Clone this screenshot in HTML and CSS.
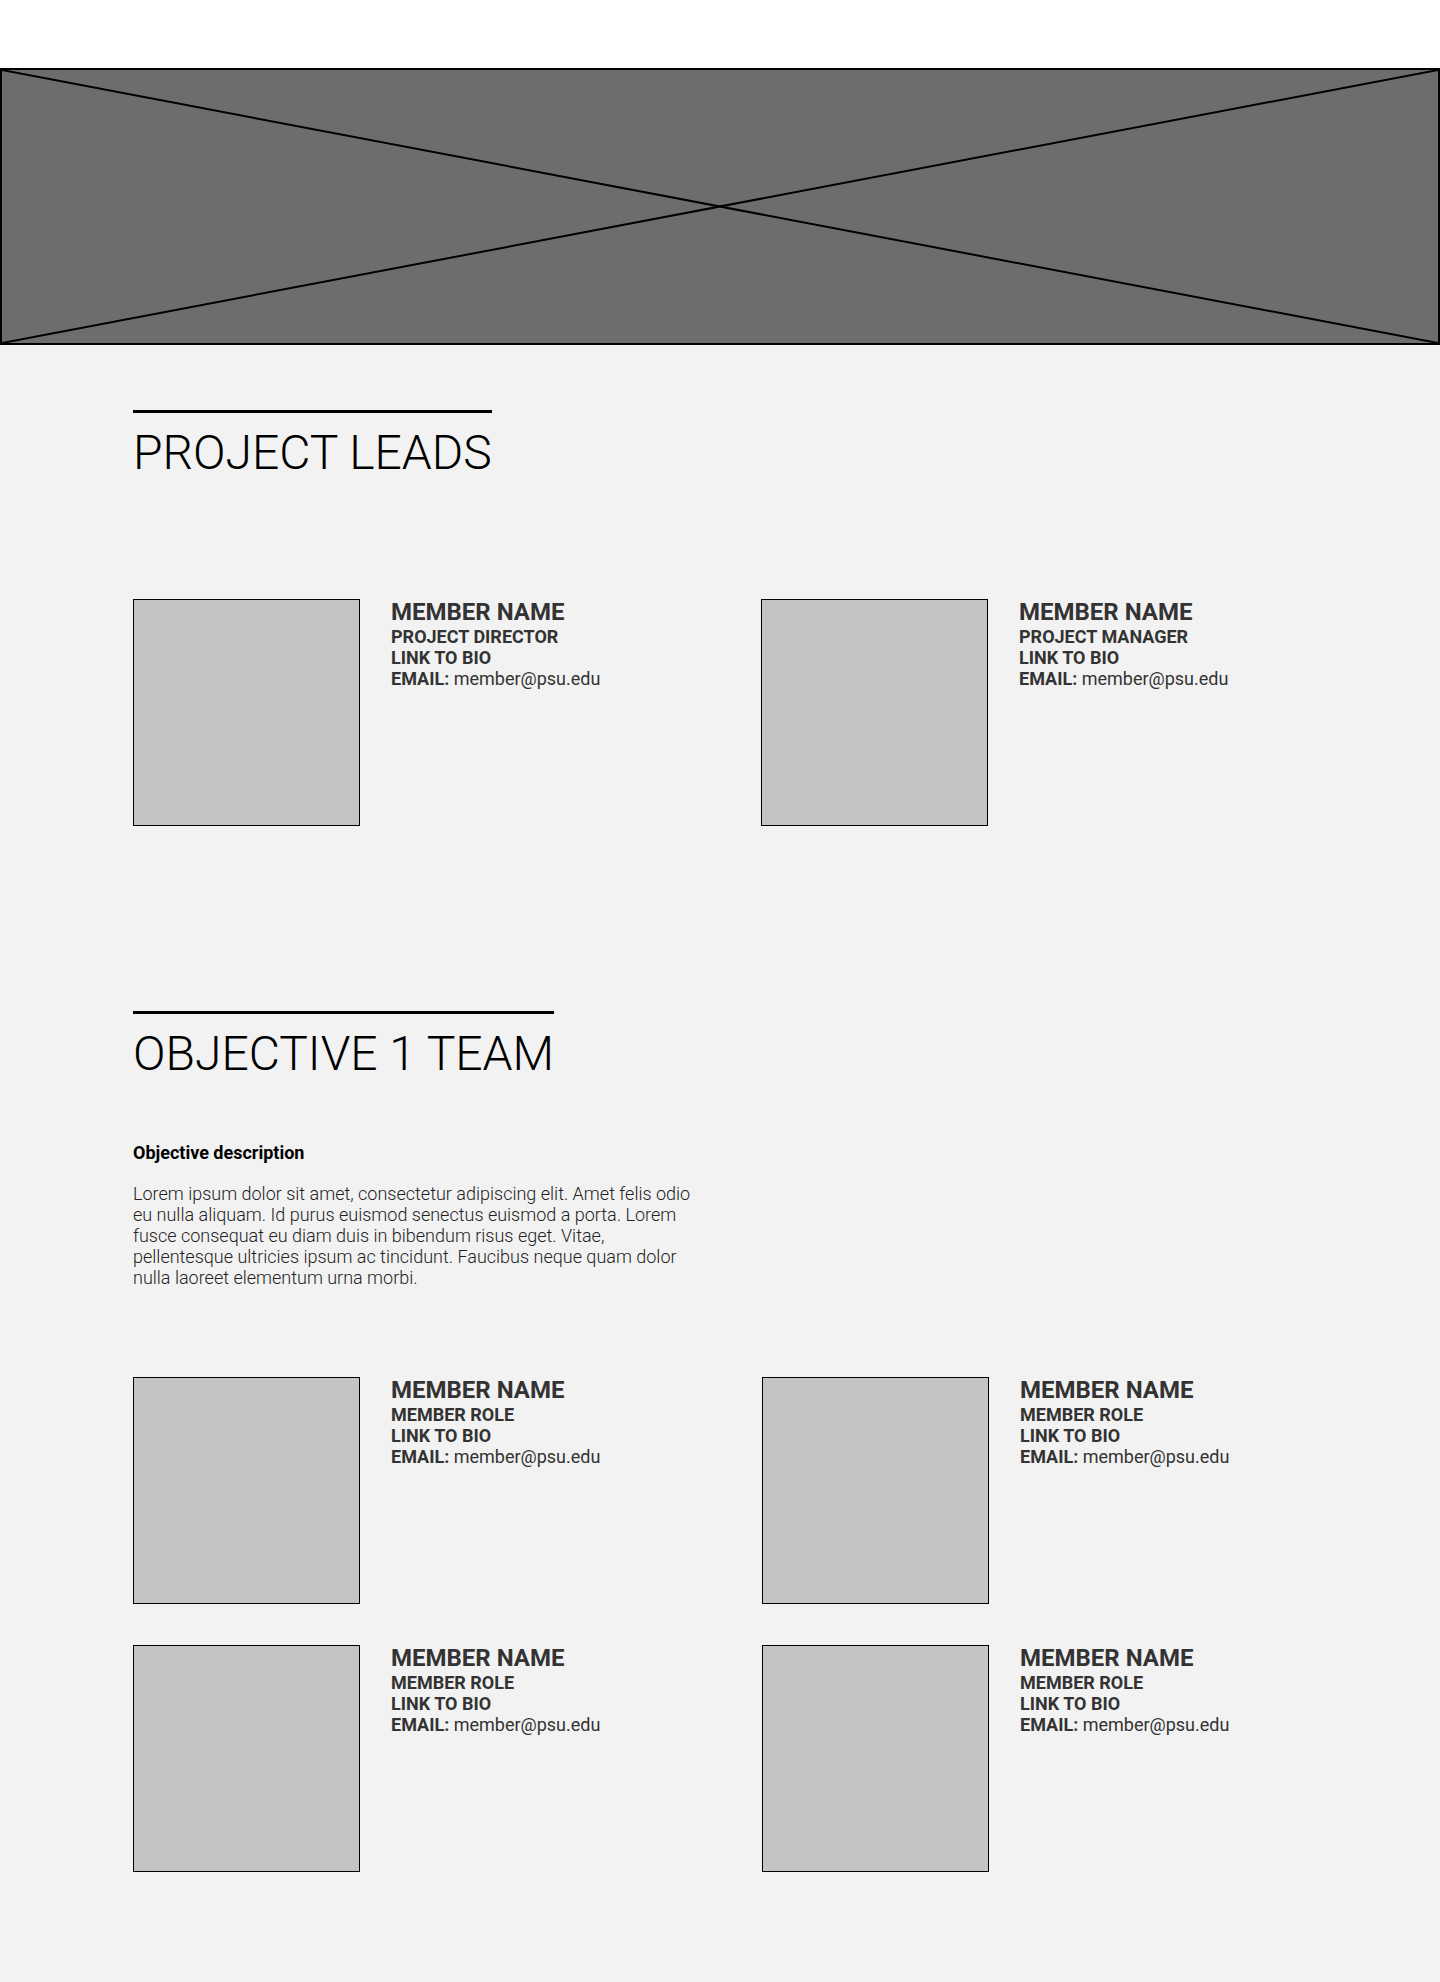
FILE: index.html
```html
<!DOCTYPE html>
<html lang="en">
<head>
<meta charset="utf-8">
<title>Team</title>
<link rel="stylesheet" href="styles.css">
</head>
<body>
<header class="topbar"></header>
<div class="hero">
  <svg class="hero-x" viewBox="0 0 100 100" preserveAspectRatio="none" aria-hidden="true">
    <line x1="0" y1="0" x2="100" y2="100" vector-effect="non-scaling-stroke"/>
    <line x1="0" y1="100" x2="100" y2="0" vector-effect="non-scaling-stroke"/>
  </svg>
</div>
<main class="content">
  <section class="team-section leads">
    <h2 class="section-title">PROJECT LEADS</h2>
    <div class="member-grid">
      <article class="member">
        <div class="photo"></div>
        <div class="info">
          <div class="name">MEMBER NAME</div>
          <div class="line">PROJECT DIRECTOR</div>
          <div class="line">LINK TO BIO</div>
          <div class="line">EMAIL: <span class="email">member@psu.edu</span></div>
        </div>
      </article>
      <article class="member">
        <div class="photo"></div>
        <div class="info">
          <div class="name">MEMBER NAME</div>
          <div class="line">PROJECT MANAGER</div>
          <div class="line">LINK TO BIO</div>
          <div class="line">EMAIL: <span class="email">member@psu.edu</span></div>
        </div>
      </article>
    </div>
  </section>
  <section class="team-section objective">
    <h2 class="section-title">OBJECTIVE 1 TEAM</h2>
    <h3 class="desc-title">Objective description</h3>
    <p class="desc">Lorem ipsum dolor sit amet, consectetur adipiscing elit. Amet felis odio eu nulla aliquam. Id purus euismod senectus euismod a porta. Lorem fusce consequat eu diam duis in bibendum risus eget. Vitae, pellentesque ultricies ipsum ac tincidunt. Faucibus neque quam dolor nulla laoreet elementum urna morbi.</p>
    <div class="member-grid team">
      <article class="member">
        <div class="photo"></div>
        <div class="info">
          <div class="name">MEMBER NAME</div>
          <div class="line">MEMBER ROLE</div>
          <div class="line">LINK TO BIO</div>
          <div class="line">EMAIL: <span class="email">member@psu.edu</span></div>
        </div>
      </article>
      <article class="member">
        <div class="photo"></div>
        <div class="info">
          <div class="name">MEMBER NAME</div>
          <div class="line">MEMBER ROLE</div>
          <div class="line">LINK TO BIO</div>
          <div class="line">EMAIL: <span class="email">member@psu.edu</span></div>
        </div>
      </article>
      <article class="member">
        <div class="photo"></div>
        <div class="info">
          <div class="name">MEMBER NAME</div>
          <div class="line">MEMBER ROLE</div>
          <div class="line">LINK TO BIO</div>
          <div class="line">EMAIL: <span class="email">member@psu.edu</span></div>
        </div>
      </article>
      <article class="member">
        <div class="photo"></div>
        <div class="info">
          <div class="name">MEMBER NAME</div>
          <div class="line">MEMBER ROLE</div>
          <div class="line">LINK TO BIO</div>
          <div class="line">EMAIL: <span class="email">member@psu.edu</span></div>
        </div>
      </article>
    </div>
  </section>
</main>
</body>
</html>
```

FILE: styles.css
```css
* {
  box-sizing: border-box;
}

html, body {
  margin: 0;
  padding: 0;
}

body {
  background: #f2f2f2;
  font-family: Roboto, "Liberation Sans", Arial, sans-serif;
  color: #333333;
}

.topbar {
  height: 68px;
  background: #ffffff;
}

.hero {
  position: relative;
  height: 277px;
  background: #6d6d6d;
  border: 2px solid #000000;
}

.hero-x {
  display: block;
  width: 100%;
  height: 100%;
}

.hero-x line {
  stroke: #000000;
  stroke-width: 2;
}

.content {
  padding: 0 133px 111px;
}

.team-section.leads {
  padding-top: 65px;
}

.team-section.objective {
  padding-top: 185px;
}

.section-title {
  display: inline-block;
  margin: 0;
  padding-top: 11px;
  border-top: 3px solid #000000;
  font-family: Roboto, "Liberation Sans", sans-serif;
  font-weight: 300;
  font-size: 48px;
  line-height: normal;
  color: #000000;
  letter-spacing: 0;
}

.member-grid {
  display: grid;
  grid-template-columns: 628px 1fr;
  row-gap: 40px;
}

.leads .member-grid {
  margin-top: 118px;
}

.member-grid.team {
  grid-template-columns: 629px 1fr;
  margin-top: 89px;
  row-gap: 41px;
}

.member {
  display: flex;
  align-items: flex-start;
}

.photo {
  flex: 0 0 227px;
  width: 227px;
  height: 227px;
  background: #c4c4c4;
  border: 1px solid #000000;
}

.info {
  margin-left: 31px;
  line-height: normal;
  color: #333333;
}

.name {
  font-size: 24px;
  font-weight: 700;
  line-height: 27px;
}

.line {
  font-size: 18px;
  font-weight: 700;
}

.email {
  font-weight: 400;
}

.desc-title {
  margin: 60px 0 0;
  font-size: 18px;
  font-weight: 700;
  line-height: normal;
  color: #000000;
}

.desc {
  margin: 20px 0 0;
  max-width: 560px;
  font-size: 18px;
  font-weight: 300;
  line-height: normal;
  color: #222222;
}
```
